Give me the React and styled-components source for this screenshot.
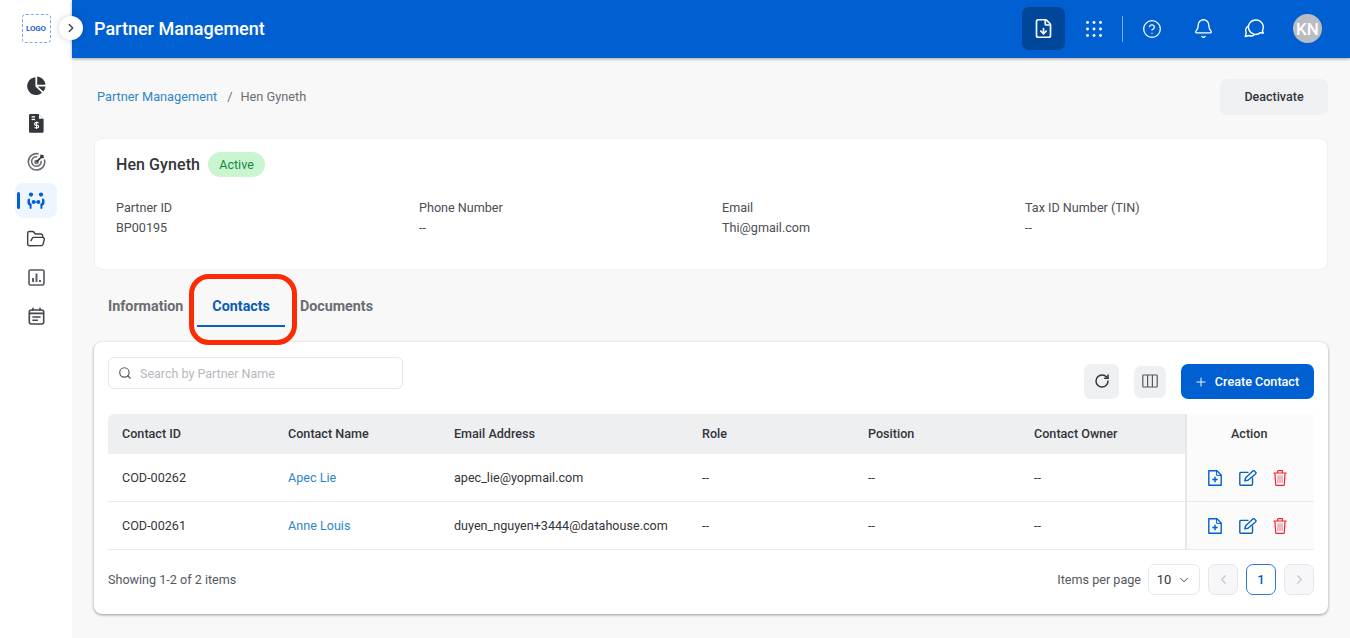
import React from "react";
import styled, { createGlobalStyle } from "styled-components";
import {
  ChevronDown,
  ChevronLeft,
  ChevronRight,
  CircleHelp,
  Bell,
  FileDown,
  FolderOpen,
  Plus,
  RotateCw,
  Search,
} from "lucide-react";

const Global = createGlobalStyle`
  html, body {
    margin: 0;
    padding: 0;
    height: 100%;
    background: #f8f8f8;
    font-family: Roboto, "Liberation Sans", sans-serif;
    font-size: 13px;
    color: #33353a;
    overflow: hidden;
  }
  * { box-sizing: border-box; }
`;

const Shell = styled.div`
  display: flex;
  width: 1350px;
  height: 638px;
  position: relative;
`;

const Sidebar = styled.aside`
  width: 72px;
  flex: none;
  background: #fff;
  display: flex;
  flex-direction: column;
  align-items: center;
  padding-top: 14px;
`;

const Logo = styled.div`
  width: 29px;
  height: 29px;
  border: 1px dashed #7fa8e8;
  border-radius: 4px;
  display: flex;
  align-items: center;
  justify-content: center;
  font-size: 8px;
  font-weight: 700;
  letter-spacing: -0.2px;
  color: #1f66cc;
  margin-bottom: 23px;
`;

const NavList = styled.nav`
  display: flex;
  flex-direction: column;
  width: 100%;
  align-items: center;
`;

const NavItem = styled.div`
  width: 42px;
  height: ${(p) => (p.$active ? "35px" : "38.4px")};
  margin: ${(p) => (p.$active ? "2px 0" : "0")};
  position: relative;
  display: flex;
  align-items: center;
  justify-content: center;
  border-radius: 8px;
  background: ${(p) => (p.$active ? "#eef5ff" : "transparent")};
  color: ${(p) => (p.$active ? "#0060d1" : "#3c3f44")};
  &::before {
    content: "";
    display: ${(p) => (p.$active ? "block" : "none")};
    position: absolute;
    left: 2px;
    top: 9px;
    width: 3px;
    height: 17px;
    border-radius: 2px;
    background: #0060d1;
  }
`;

const Toggle = styled.button`
  position: absolute;
  left: 59px;
  top: 16px;
  width: 24px;
  height: 24px;
  border-radius: 50%;
  border: 0;
  padding: 0;
  background: #fff;
  color: #44474c;
  display: flex;
  align-items: center;
  justify-content: center;
  box-shadow: 0 0 6px rgba(0, 0, 0, 0.18);
  z-index: 3;
`;

const Main = styled.div`
  flex: 1;
  min-width: 0;
  display: flex;
  flex-direction: column;
`;

const Header = styled.header`
  height: 58px;
  flex: none;
  background: #0060d1;
  box-shadow: 0 1px 3px rgba(0, 0, 0, 0.35);
  display: flex;
  align-items: center;
  padding: 0 28px 1px 22px;
  color: #fff;
  position: relative;
  z-index: 2;
`;

const Title = styled.h1`
  margin: 0;
  flex: 1;
  font-size: 18px;
  font-weight: 500;
`;

const HeaderIcons = styled.div`
  display: flex;
  align-items: center;
`;

const ExportButton = styled.div`
  width: 43px;
  height: 43px;
  border-radius: 7px;
  background: #00469b;
  display: flex;
  align-items: center;
  justify-content: center;
  margin-right: 7px;
`;

const HeaderIcon = styled.div`
  width: ${(p) => p.$w || 44}px;
  display: flex;
  justify-content: center;
  align-items: center;
`;

const Divider = styled.div`
  width: 1px;
  height: 26px;
  background: rgba(255, 255, 255, 0.5);
  margin: 0 7px 0 7px;
`;

const Avatar = styled.div`
  width: 29px;
  height: 29px;
  border-radius: 50%;
  background: #b9bcc2;
  color: #fff;
  font-size: 17px;
  font-weight: 500;
  display: flex;
  align-items: center;
  justify-content: center;
  margin-left: 17px;
`;

const Content = styled.main`
  flex: 1;
  padding: 21px 22px 0;
  display: flex;
  flex-direction: column;
`;

const TopRow = styled.div`
  display: flex;
  justify-content: space-between;
  align-items: center;
  height: 36px;
  margin-bottom: 23px;
`;

const Crumbs = styled.div`
  padding: 0 0 2px 3px;
  font-size: 12.75px;
  color: #6a6d73;
  a {
    color: #2f86c9;
    text-decoration: none;
  }
  span {
    margin: 0 8px 0 10px;
  }
`;

const GreyButton = styled.button`
  width: ${(p) => p.$w || 108}px;
  height: ${(p) => p.$h || 36}px;
  border: 0;
  border-radius: 7px;
  background: #eff0f2;
  color: #33353a;
  font: 500 12.5px Roboto, sans-serif;
  display: flex;
  align-items: center;
  justify-content: center;
  padding: 0 0 1px;
`;

const InfoCard = styled.section`
  height: 132px;
  background: #fff;
  border: 1px solid #f1f1f3;
  border-radius: 8px;
  padding: 13px 0 0 21px;
`;

const NameRow = styled.div`
  display: flex;
  align-items: center;
  gap: 8px;
  height: 25px;
  margin-bottom: 21px;
`;

const Name = styled.div`
  font-size: 16px;
  font-weight: 500;
  letter-spacing: 0.08px;
  color: #33353a;
`;

const Badge = styled.div`
  width: 57px;
  height: 25px;
  border-radius: 13px;
  background: #c9f5d1;
  color: #16893f;
  font-size: 12.5px;
  display: flex;
  align-items: center;
  justify-content: center;
`;

const InfoGrid = styled.div`
  display: grid;
  grid-template-columns: repeat(4, 303px);
`;

const Field = styled.div`
  font-size: 12.6px;
  line-height: 19.5px;
  color: #4b4e54;
`;

const Tabs = styled.div`
  display: flex;
  height: 72px;
  align-items: flex-start;
  position: relative;
  padding-left: 14px;
`;

const Tab = styled.div`
  height: 57px;
  margin-left: ${(p) => p.$gap || 0}px;
  padding: 27px ${(p) => p.$pad || 0}px 0;
  font-size: 14.3px;
  font-weight: 700;
  line-height: 18px;
  color: ${(p) => (p.$active ? "#0a5cb0" : "#6a6d73")};
  position: relative;
  &::after {
    content: "";
    display: ${(p) => (p.$active ? "block" : "none")};
    position: absolute;
    left: 0;
    right: 0;
    bottom: 0;
    height: 2px;
    background: #0a62bb;
  }
`;

const Highlight = styled.div`
  position: absolute;
  left: 95px;
  top: 4px;
  width: 108px;
  height: 71px;
  border: 5px solid #fb2b06;
  border-radius: 20px;
`;

const TableCard = styled.section`
  height: 272px;
  background: #fff;
  border-radius: 8px;
  box-shadow: 0 1px 3px rgba(0, 0, 0, 0.4);
  padding: 15px 14px 0;
`;

const Toolbar = styled.div`
  display: flex;
  justify-content: space-between;
  height: 57px;
`;

const SearchBox = styled.div`
  width: 295px;
  height: 32px;
  border: 1px solid #e6e7ea;
  border-radius: 6px;
  display: flex;
  align-items: center;
  gap: 8px;
  padding-left: 9px;
  color: #55585e;
  font-size: 12.5px;
  span {
    color: #b5b8be;
  }
`;

const ToolActions = styled.div`
  display: flex;
  align-items: center;
  height: 42px;
  padding-top: 7px;
  gap: 15px;
`;

const CreateButton = styled.button`
  width: 133px;
  height: 35px;
  border: 0;
  border-radius: 7px;
  background: #0060d1;
  color: #fff;
  font: 500 12.6px Roboto, sans-serif;
  display: flex;
  align-items: center;
  justify-content: center;
  gap: 7px;
  padding: 0 2px 0 0;
`;

const COLUMNS = "166px 166px 248px 166px 166px 166px 128px";

const Row = styled.div`
  display: grid;
  grid-template-columns: ${COLUMNS};
  height: ${(p) => p.$h}px;
  border-bottom: ${(p) => (p.$head ? "0" : "1px solid #e9eaec")};
  background: ${(p) => (p.$head ? "#eeeff1" : "#fff")};
  border-radius: ${(p) => (p.$head ? "6px 6px 0 0" : "0")};
`;

const Cell = styled.div`
  display: flex;
  align-items: center;
  padding: 0 0 ${(p) => (p.$head ? "1px" : "0")} 14px;
  font-size: 12.6px;
  font-weight: ${(p) => (p.$head ? 500 : 400)};
  color: ${(p) => (p.$link ? "#2f86c9" : "#33353a")};
`;

const ActionCell = styled.div`
  display: flex;
  align-items: center;
  justify-content: flex-start;
  padding-left: ${(p) => (p.$head ? "44px" : "21px")};
  padding-bottom: ${(p) => (p.$head ? "1px" : "0")};
  border-left: 2px solid #e6e7ea;
  margin-left: -1px;
  background: #fbfbfc;
  font-size: 12.6px;
  font-weight: 500;
  color: #33353a;
`;

const ActionIcons = styled.div`
  display: flex;
  align-items: center;
  gap: 16.5px;
`;

const Footer = styled.div`
  display: flex;
  align-items: center;
  justify-content: space-between;
  height: 59px;
  font-size: 12.6px;
  color: #55585e;
`;

const Pager = styled.div`
  display: flex;
  align-items: center;
  gap: 8px;
`;

const PagerLabel = styled.div`
  margin-right: -1px;
`;

const PageSize = styled.div`
  width: 52px;
  height: 31px;
  border: 1px solid #e6e7ea;
  border-radius: 7px;
  display: flex;
  align-items: center;
  justify-content: center;
  gap: 6px;
  color: #33353a;
  font-size: 13px;
`;

const PageButton = styled.div`
  width: 30px;
  height: 31px;
  border: 1px solid ${(p) => (p.$active ? "#2f76d9" : "#e6e7ea")};
  border-radius: 7px;
  background: ${(p) => (p.$active ? "#fff" : "#f7f7f9")};
  color: ${(p) => (p.$active ? "#0060d1" : "#c6c8cd")};
  font-size: 13px;
  font-weight: 500;
  display: flex;
  align-items: center;
  justify-content: center;
`;

const PieIcon = () => (
  <svg width="19" height="19" viewBox="0 0 19 19" fill="#33363b">
    <path d="M8.4 1.2v9.2l6.6 6.3A8.9 8.9 0 1 1 8.4 1.2z" />
    <path d="M10.2.6a8.8 8.8 0 0 1 8.2 8.1h-8.2z" />
    <path d="M10.8 10.4h7.7a8.9 8.9 0 0 1-2.2 5.1z" />
  </svg>
);

const InvoiceIcon = () => (
  <svg width="15" height="19" viewBox="0 0 15 19">
    <path d="M1.2 0h8.3L14.6 5v12.6a1.2 1.2 0 0 1-1.2 1.2H1.2A1.2 1.2 0 0 1 0 17.6V1.2A1.2 1.2 0 0 1 1.2 0z" fill="#33363b" />
    <path d="M10 .6v4.2h4.2" fill="#fff" />
    <rect x="2.6" y="2.2" width="3.4" height="1.3" fill="#fff" />
    <rect x="2.6" y="4.8" width="3.4" height="1.3" fill="#fff" />
    <path d="M9.6 8.6H6.9a1.2 1.2 0 0 0 0 2.6h1.4a1.2 1.2 0 0 1 0 2.6H5.4M7.6 7.5v7.5" fill="none" stroke="#fff" strokeWidth="1.1" />
  </svg>
);

const TargetIcon = () => (
  <svg width="19" height="19" viewBox="0 0 19 19" fill="none" stroke="#6a6d72" strokeWidth="1.6" strokeLinecap="round">
    <path d="M17.5 8a8.2 8.2 0 1 1-6.4-6.2" />
    <path d="M14.2 9.6a4.8 4.8 0 1 1-4.6-4.9" />
    <circle cx="9.5" cy="10" r="1.5" />
    <path d="M9.8 9.6l6-6M14 3.2v2.2h2.2" stroke="#33363b" />
  </svg>
);

const PartnerIcon = () => (
  <svg width="20" height="18" viewBox="0 0 20 18" fill="#0060d1" stroke="none">
    <circle cx="5" cy="2.6" r="2.1" />
    <circle cx="15" cy="2.6" r="2.1" />
    <circle cx="7.6" cy="10" r="1.9" />
    <circle cx="12.4" cy="10" r="1.9" />
    <path d="M7.6 10h4.8" stroke="#0060d1" strokeWidth="1.2" />
    <path d="M3.4 6.6c-1.1 0-1.9.8-1.9 1.9v2.3c0 1.3.8 2.4 2.1 2.9V16a1 1 0 0 0 2 0v-4.2c-1-.2-1.6-.9-1.6-2V7.4c0-.5-.2-.8-.6-.8z" />
    <path d="M16.6 6.6c1.1 0 1.9.8 1.9 1.9v2.3c0 1.3-.8 2.4-2.1 2.9V16a1 1 0 0 1-2 0v-4.2c1-.2 1.6-.9 1.6-2V7.4c0-.5.2-.8.6-.8z" />
  </svg>
);

const ChartIcon = () => (
  <svg width="17" height="17" viewBox="0 0 17 17" fill="none" stroke="#55585d" strokeWidth="1.6">
    <rect x="1" y="1" width="15" height="15" rx="1.5" />
    <path d="M5 13V9M8.5 13V4.5M12 13v-2" strokeWidth="1.9" />
  </svg>
);

const CalendarIcon = () => (
  <svg width="17" height="18" viewBox="0 0 17 18" fill="none" stroke="#44474c" strokeWidth="1.6">
    <rect x="1.3" y="3" width="14.4" height="14" rx="2" />
    <path d="M1.3 6.4h14.4M5 .8v3M12 .8v3M4.4 10h8.2M4.4 13.2h5.6" />
  </svg>
);

const ChatIcon = () => (
  <svg width="21" height="19" viewBox="0 0 21 19" fill="none" stroke="#fff" strokeWidth="1.4" strokeLinejoin="round">
    <path d="M12 1a7.2 7.2 0 0 1 6.4 10.6l.9 2.6-2.9-.6A7.2 7.2 0 1 1 12 1z" />
    <path d="M4.6 6.8A5 5 0 0 0 2.2 13.6l-.9 3.9 3.6-1a5 5 0 0 0 6-1.4" />
  </svg>
);

const GridDots = () => (
  <svg width="16" height="16" viewBox="0 0 16 16" fill="#fff">
    {[1.5, 8, 14.5].flatMap((y) =>
      [1.5, 8, 14.5].map((x) => <circle key={`${x}-${y}`} cx={x} cy={y} r="1.45" />)
    )}
  </svg>
);

const ColumnsIcon = () => (
  <svg width="16" height="14" viewBox="0 0 16 14" fill="none" stroke="#55585d" strokeWidth="1.2">
    <rect x=".8" y="1" width="14.4" height="12" rx=".8" />
    <path d="M5.6 1v12M10.4 1v12" />
  </svg>
);

const AddFileIcon = () => (
  <svg width="14" height="16" viewBox="0 0 14 16" fill="none" stroke="#0060d1" strokeWidth="1.4">
    <path d="M.8.8h8.1l4.3 4.3v10.1H.8z" strokeLinejoin="round" />
    <path d="M8.6.8v4.6h4.6" strokeWidth="1" />
    <path d="M7 6.8v5.4M4.3 9.5h5.4" strokeWidth="1.5" />
  </svg>
);

const EditIcon = () => (
  <svg width="18" height="16" viewBox="0 0 18 16" fill="none" stroke="#0a62bb" strokeWidth="1.4">
    <path d="M9.5 2.4H1.8a1 1 0 0 0-1 1v10.8a1 1 0 0 0 1 1h10.7a1 1 0 0 0 1-1V7.6" />
    <path d="M5.8 10.8l.7-2.9L13.8.9a1.1 1.1 0 0 1 1.5 0l1.4 1.3a1.1 1.1 0 0 1 0 1.5L9 10.2z" strokeLinejoin="round" />
  </svg>
);

const TrashIcon = () => (
  <svg width="14" height="16" viewBox="0 0 14 16" fill="none" stroke="#f0212b" strokeWidth="1.2">
    <path d="M.4 3h13.2M4.6 3V1.4c0-.4.3-.7.7-.7h3.4c.4 0 .7.3.7.7V3" />
    <path d="M1.9 3l.8 11.4c0 .5.4.9.9.9h6.8c.5 0 .9-.4.9-.9L12.1 3" />
    <path d="M5 5.4v7.4M7 5.4v7.4M9 5.4v7.4" strokeWidth=".9" stroke="#f4636a" />
  </svg>
);

const contacts = [
  { id: "COD-00262", name: "Apec Lie", email: "apec_lie@yopmail.com" },
  { id: "COD-00261", name: "Anne Louis", email: "duyen_nguyen+3444@datahouse.com" },
];

const headings = ["Contact ID", "Contact Name", "Email Address", "Role", "Position", "Contact Owner"];

const fields = [
  ["Partner ID", "BP00195"],
  ["Phone Number", "--"],
  ["Email", "Thi@gmail.com"],
  ["Tax ID Number (TIN)", "--"],
];

export default function App() {
  return (
    <Shell>
      <Global />
      <Sidebar>
        <Logo>LOGO</Logo>
        <NavList>
          <NavItem><PieIcon /></NavItem>
          <NavItem><InvoiceIcon /></NavItem>
          <NavItem><TargetIcon /></NavItem>
          <NavItem $active><PartnerIcon /></NavItem>
          <NavItem><FolderOpen size={20} strokeWidth={1.7} /></NavItem>
          <NavItem><ChartIcon /></NavItem>
          <NavItem><CalendarIcon /></NavItem>
        </NavList>
      </Sidebar>
      <Toggle><ChevronRight size={14} strokeWidth={2.5} /></Toggle>
      <Main>
        <Header>
          <Title>Partner Management</Title>
          <HeaderIcons>
            <ExportButton><FileDown size={21} strokeWidth={1.9} /></ExportButton>
            <HeaderIcon $w={43}><GridDots /></HeaderIcon>
            <Divider />
            <HeaderIcon $w={44}><CircleHelp size={20} strokeWidth={1.5} /></HeaderIcon>
            <HeaderIcon $w={58}><Bell size={21} strokeWidth={1.5} /></HeaderIcon>
            <HeaderIcon $w={44}><ChatIcon /></HeaderIcon>
            <Avatar>KN</Avatar>
          </HeaderIcons>
        </Header>
        <Content>
          <TopRow>
            <Crumbs>
              <a href="#partners">Partner Management</a>
              <span>/</span>
              Hen Gyneth
            </Crumbs>
            <GreyButton>Deactivate</GreyButton>
          </TopRow>
          <InfoCard>
            <NameRow>
              <Name>Hen Gyneth</Name>
              <Badge>Active</Badge>
            </NameRow>
            <InfoGrid>
              {fields.map(([label, value]) => (
                <Field key={label}>
                  <div>{label}</div>
                  <div>{value}</div>
                </Field>
              ))}
            </InfoGrid>
          </InfoCard>
          <Tabs>
            <Tab>Information</Tab>
            <Tab $pad={15} $gap={14} $active>Contacts</Tab>
            <Tab $gap={15}>Documents</Tab>
            <Highlight />
          </Tabs>
          <TableCard>
            <Toolbar>
              <SearchBox>
                <Search size={14} />
                <span>Search by Partner Name</span>
              </SearchBox>
              <ToolActions>
                <GreyButton $w={35} $h={35}><RotateCw size={16} strokeWidth={2.2} /></GreyButton>
                <GreyButton $w={32} $h={32}><ColumnsIcon /></GreyButton>
                <CreateButton><Plus size={14} strokeWidth={1.6} />Create Contact</CreateButton>
              </ToolActions>
            </Toolbar>
            <Row $head $h={40}>
              {headings.map((h) => <Cell $head key={h}>{h}</Cell>)}
              <ActionCell $head>Action</ActionCell>
            </Row>
            {contacts.map((c) => (
              <Row $h={48} key={c.id}>
                <Cell>{c.id}</Cell>
                <Cell $link>{c.name}</Cell>
                <Cell>{c.email}</Cell>
                <Cell>--</Cell>
                <Cell>--</Cell>
                <Cell>--</Cell>
                <ActionCell>
                  <ActionIcons>
                    <AddFileIcon />
                    <EditIcon />
                    <TrashIcon />
                  </ActionIcons>
                </ActionCell>
              </Row>
            ))}
            <Footer>
              <div>Showing 1-2 of 2 items</div>
              <Pager>
                <PagerLabel>Items per page</PagerLabel>
                <PageSize>10<ChevronDown size={14} strokeWidth={1.5} /></PageSize>
                <PageButton><ChevronLeft size={15} /></PageButton>
                <PageButton $active>1</PageButton>
                <PageButton><ChevronRight size={15} /></PageButton>
              </Pager>
            </Footer>
          </TableCard>
        </Content>
      </Main>
    </Shell>
  );
}
